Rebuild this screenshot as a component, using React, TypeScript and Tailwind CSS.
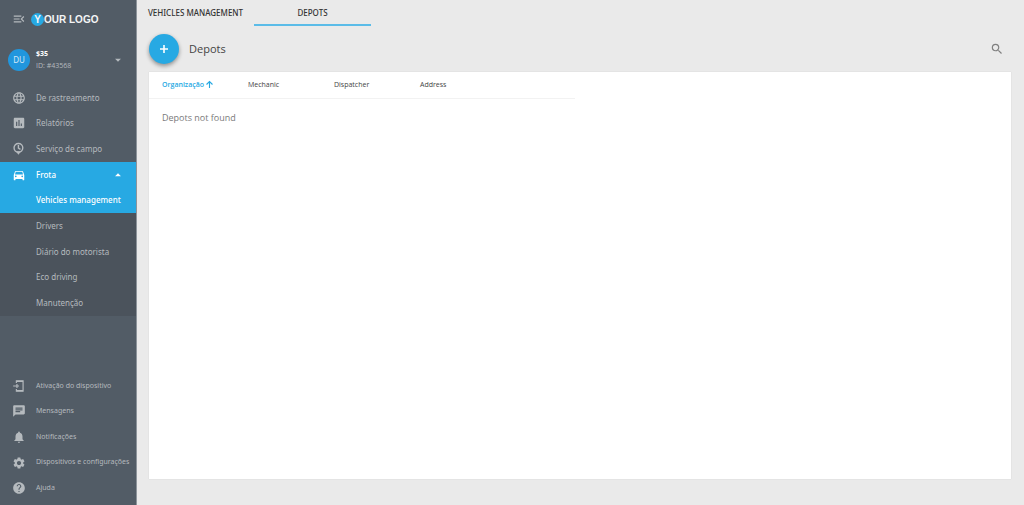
import type { ReactNode } from "react";
import {
  MdArrowDropDown,
  MdArrowDropUp,
  MdAssessment,
  MdChat,
  MdDirectionsCar,
  MdHelp,
  MdLanguage,
  MdMenuOpen,
  MdNotifications,
  MdSearch,
  MdSettings,
} from "react-icons/md";

function PinClockIcon() {
  return (
    <svg viewBox="0 0 24 24" className="size-3.5" fill="none" stroke="currentColor" strokeWidth="2.400" aria-hidden="true">
      <circle cx="11" cy="10" r="7.500" />
      <path d="M11 5v5.500l3.500 2" />
      <path d="M6.500 16l4.500 6 4.500-6z" fill="currentColor" stroke="none" />
    </svg>
  );
}

function ActivationIcon() {
  return (
    <svg viewBox="0 0 24 24" className="size-3.5" fill="none" stroke="currentColor" strokeWidth="2" aria-hidden="true">
      <path d="M7.500 7V3H19v18H7.500v-4" />
      <path d="M7.500 4H19M7.500 20H19M2 12h10M8.500 8.500v7" />
    </svg>
  );
}

function PlusIcon() {
  return (
    <svg viewBox="0 0 14 14" className="size-3.5" fill="none" stroke="currentColor" strokeWidth="1.600" aria-hidden="true">
      <path d="M7 3v8M3 7h8" />
    </svg>
  );
}

function SortUpIcon() {
  return (
    <svg viewBox="0 0 24 24" className="size-[9px]" fill="none" stroke="currentColor" strokeWidth="3" aria-hidden="true">
      <path d="M12 21V5M4 12l8-8 8 8" />
    </svg>
  );
}

function NavLink({ icon, label, small }: { icon?: ReactNode; label: string; small?: boolean }) {
  return (
    <a href="#" className={`flex items-center ${small ? "text-[7px]" : "text-[8px]"}`}>
      <span className="flex w-9 shrink-0 pl-3">{icon}</span>
      <span className="whitespace-nowrap">{label}</span>
    </a>
  );
}

const icon = "size-3.5";

export default function App() {
  return (
    <div className="flex min-h-screen bg-[#eaeaea] font-['Open_Sans',sans-serif] text-[#444]">
      <aside className="flex w-[137px] shrink-0 flex-col border-r border-[#8d949b] bg-[#525c66] text-[#b5babe]">
        <header className="flex h-[38px] items-center pl-3">
          <button type="button" aria-label="Collapse menu">
            <MdMenuOpen className="size-3.5" />
          </button>
          <a href="#" className="ml-[5px] flex items-center font-['Liberation_Sans',sans-serif] text-[10px] font-bold text-[#f4f5f6]">
            <span className="flex size-[13px] items-center justify-center rounded-full bg-[#27a9e3]">Y</span>
            <span className="whitespace-nowrap">OUR LOGO</span>
          </a>
        </header>

        <button type="button" className="flex h-[47px] items-center pb-1 pl-2 text-left">
          <span className="flex size-[22px] items-center justify-center rounded-full bg-[#2196dd] font-['Noto_Sans',sans-serif] text-[8px] text-[#d5eaf8]">
            DU
          </span>
          <span className="ml-1.5 flex flex-1 flex-col text-[7px] leading-[12px]">
            <span className="font-bold text-white">$35</span>
            <span>ID: #43568</span>
          </span>
          <MdArrowDropDown className="mr-[11px] size-3.5" />
        </button>

        <nav className="flex flex-1 flex-col font-['Noto_Sans',sans-serif]">
          <div className="grid h-[77px] grid-rows-3">
            <NavLink icon={<MdLanguage className={icon} />} label="De rastreamento" />
            <NavLink icon={<MdAssessment className={icon} />} label="Relatórios" />
            <NavLink icon={<PinClockIcon />} label="Serviço de campo" />
          </div>
          <div className="grid h-[51px] grid-rows-2 bg-[#27a9e3] font-medium text-white">
            <button type="button" aria-expanded="true" className="flex items-center text-left text-[8px]">
              <span className="flex w-9 pl-3">
                <MdDirectionsCar className={icon} />
              </span>
              <span className="flex-1">Frota</span>
              <MdArrowDropUp className="mr-[11px] size-3.5" />
            </button>
            <NavLink label="Vehicles management" />
          </div>
          <div className="grid h-[103px] grid-rows-4 bg-[#4b535c]">
            <NavLink label="Drivers" />
            <NavLink label="Diário do motorista" />
            <NavLink label="Eco driving" />
            <NavLink label="Manutenção" />
          </div>
          <div className="mt-auto mb-1 grid h-[128px] grid-rows-5">
            <NavLink small icon={<ActivationIcon />} label="Ativação do dispositivo" />
            <NavLink small icon={<MdChat className={icon} />} label="Mensagens" />
            <NavLink small icon={<MdNotifications className={icon} />} label="Notificações" />
            <NavLink small icon={<MdSettings className={icon} />} label="Dispositivos e configurações" />
            <NavLink small icon={<MdHelp className={icon} />} label="Ajuda" />
          </div>
        </nav>
      </aside>

      <main className="flex min-w-0 flex-1 flex-col pr-[13px] pb-[26px] pl-3">
        <nav className="-ml-3 flex h-[26px] font-['Noto_Sans',sans-serif] text-[8px] font-medium text-[#333]">
          <a href="#" className="flex w-[117px] items-center justify-center border-b-2 border-transparent pt-0.5">
            VEHICLES MANAGEMENT
          </a>
          <a href="#" aria-current="page" className="flex w-[117px] items-center justify-center border-b-2 border-[#5bbce8] pt-0.5">
            DEPOTS
          </a>
        </nav>

        <div className="flex h-[46px] items-center">
          <button
            type="button"
            aria-label="Add depot"
            className="flex size-[30px] items-center justify-center rounded-full bg-[#27a9e3] text-white shadow-[0_2px_4px_rgba(0,0,0,0.4)]"
          >
            <PlusIcon />
          </button>
          <h1 className="ml-2.5 flex-1 text-[11px] font-medium">Depots</h1>
          <button type="button" aria-label="Search" className="mr-[7px] text-[#808080]">
            <MdSearch className="size-3.5" />
          </button>
        </div>

        <section className="flex-1 bg-white shadow-[0_0_1px_rgba(0,0,0,0.15)]">
          <table className="w-[426px] table-fixed border-collapse text-left">
            <thead>
              <tr className="h-[26px] border-b border-[#f2f2f2] text-[7px] font-medium">
                <th className="w-[86px] pl-[13px] font-semibold whitespace-nowrap text-[#27a9e3]">
                  <button type="button" className="flex items-center gap-px">
                    Organização
                    <SortUpIcon />
                  </button>
                </th>
                <th className="w-[86px] pl-[13px] font-medium">Mechanic</th>
                <th className="w-[86px] pl-[13px] font-medium">Dispatcher</th>
                <th className="pl-[13px] font-medium">Address</th>
              </tr>
            </thead>
            <tbody>
              <tr className="h-[38px]">
                <td colSpan={4} className="pl-[13px] text-[9px] text-[#7a7a7a]">
                  Depots not found
                </td>
              </tr>
            </tbody>
          </table>
        </section>
      </main>
    </div>
  );
}
